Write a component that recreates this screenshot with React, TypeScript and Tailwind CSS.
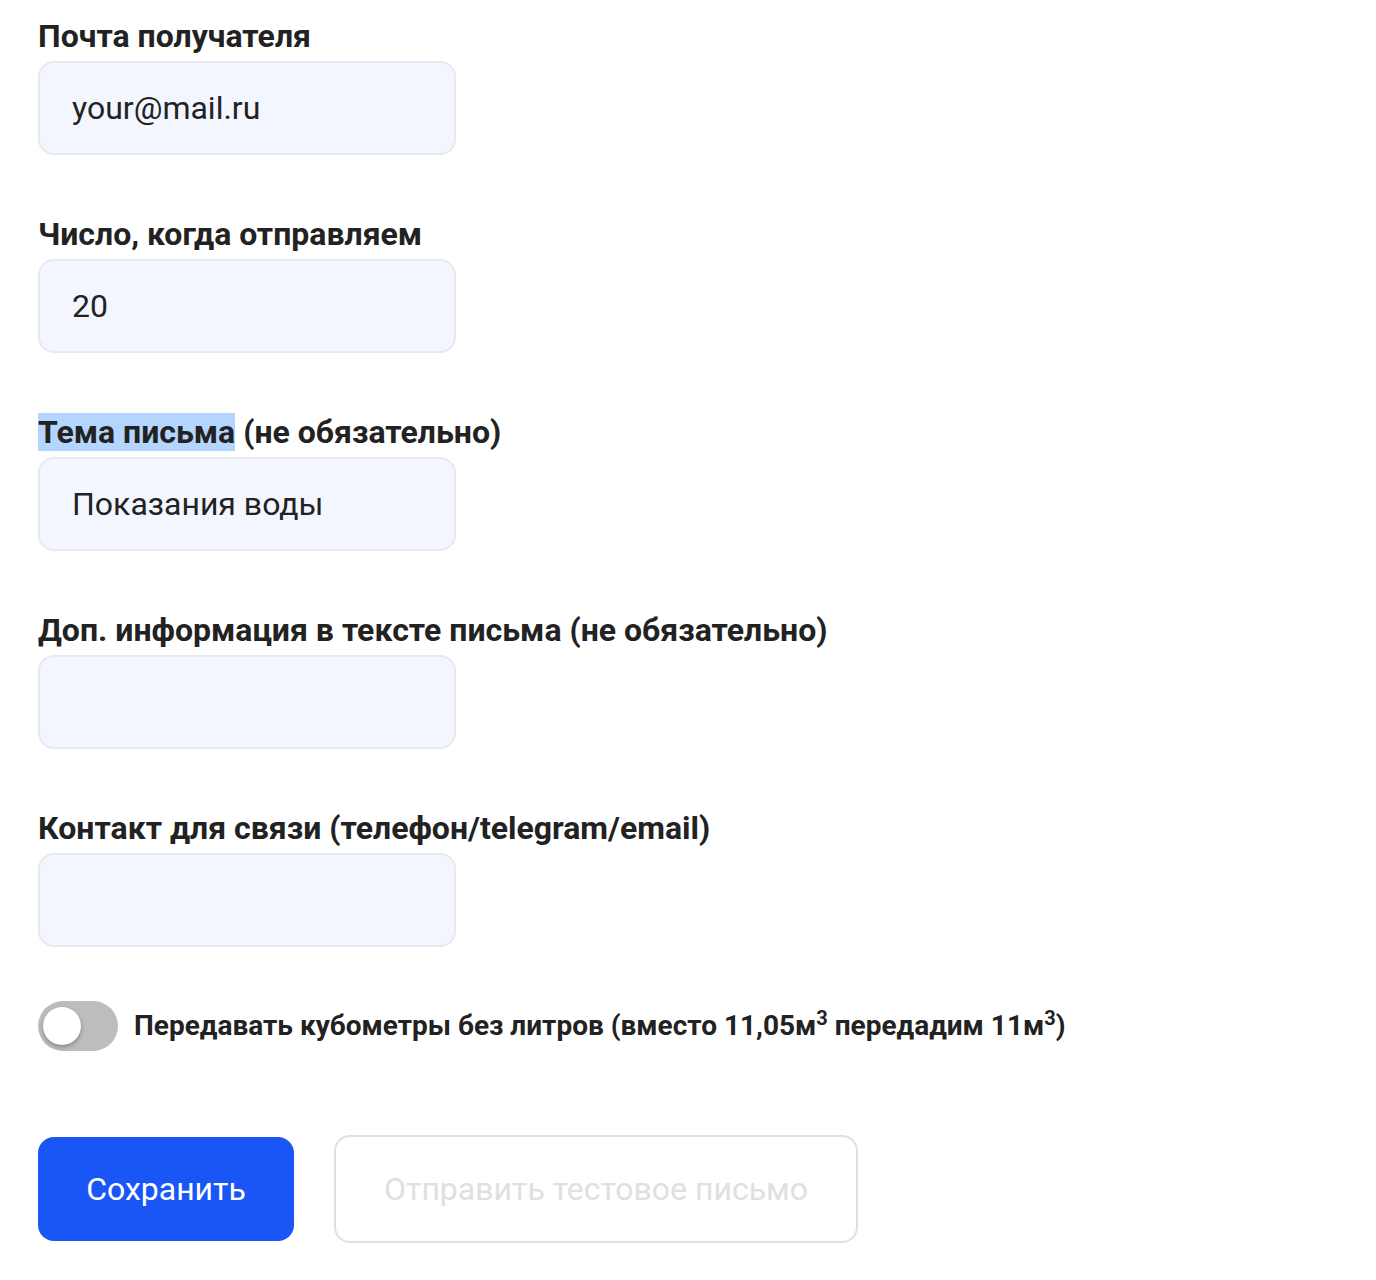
import React from "react"

const labelCls = "block text-[32px] leading-[36px] font-bold text-[#222222]"
const inputCls =
  "mt-[7px] block h-[94px] w-[418px] rounded-[16px] border-2 border-[#e6e9f2] bg-[#f3f6fe] px-[32px] text-[32px] text-[#222222] outline-none"

function Field({ label, value }: { label: React.ReactNode; value: string }) {
  return (
    <div>
      <label className={labelCls}>{label}</label>
      <input className={inputCls} defaultValue={value} />
    </div>
  )
}

export default function App() {
  return (
    <div className="min-h-[1280px] bg-white pl-[38px] pt-[18px] font-['Roboto',sans-serif]">
      <div className="flex flex-col gap-[61px]">
        <Field label="Почта получателя" value="your@mail.ru" />
        <Field label="Число, когда отправляем" value="20" />
        <Field
          label={
            <>
              <span className="bg-[#b4d5fe]">Тема письма</span> (не обязательно)
            </>
          }
          value="Показания воды"
        />
        <Field label="Доп. информация в тексте письма (не обязательно)" value="" />
        <Field label="Контакт для связи (телефон/telegram/email)" value="" />
      </div>

      {/* тумблер */}
      <div className="mt-[54px] flex items-center gap-[16px]">
        <button className="relative h-[50px] w-[80px] shrink-0 rounded-full bg-[#bdbdbd]">
          <span className="absolute left-[5px] top-[6px] h-[38px] w-[38px] rounded-full bg-white shadow-[0_2px_4px_rgba(0,0,0,0.3)]" />
        </button>
        <span className="text-[28px] font-bold leading-[36px] text-[#222222]">
          Передавать кубометры без литров (вместо 11,05м<sup className="text-[20px]">3</sup> передадим 11м
          <sup className="text-[20px]">3</sup>)
        </span>
      </div>

      <div className="mt-[84px] flex items-center gap-[40px]">
        <button className="h-[104px] w-[256px] rounded-[16px] bg-[#1a56f6] text-[32px] text-white">
          Сохранить
        </button>
        <button className="h-[108px] w-[524px] rounded-[16px] border-2 border-[#e0e0e0] bg-white text-[32px] text-[#e0e0e0]">
          Отправить тестовое письмо
        </button>
      </div>
    </div>
  )
}
